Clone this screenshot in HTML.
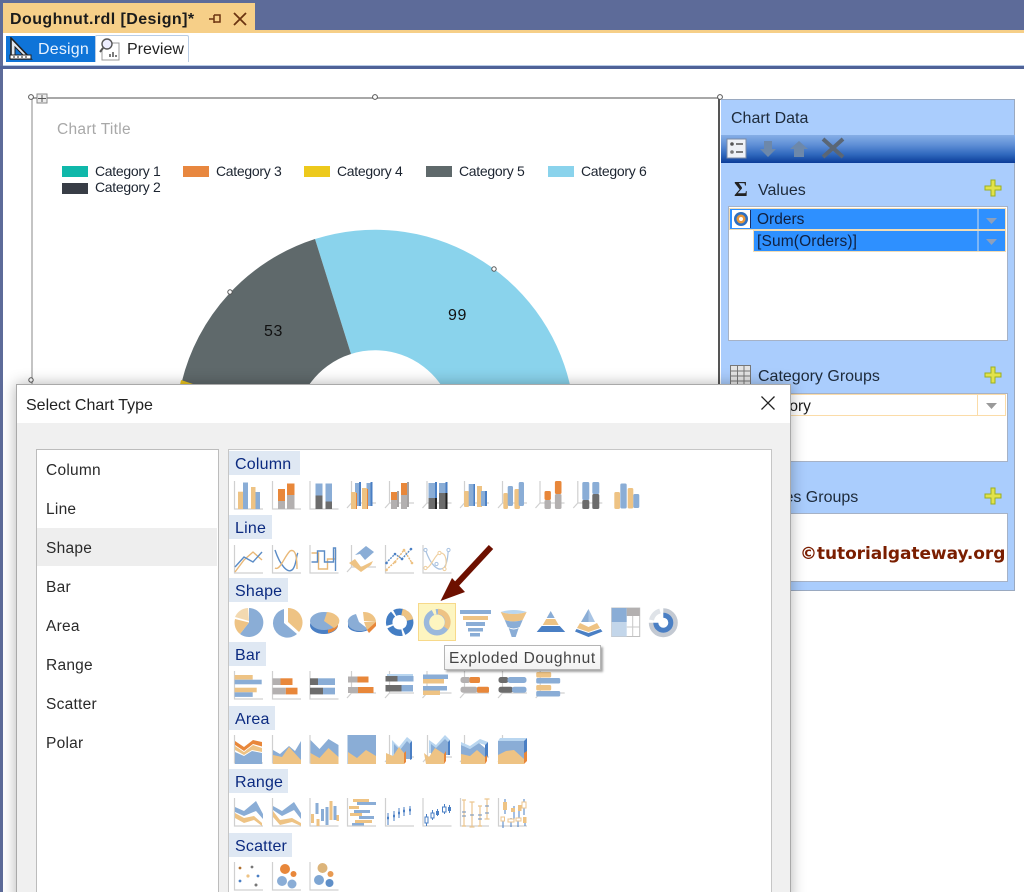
<!DOCTYPE html>
<html><head><meta charset="utf-8"><style>
html,body{margin:0;padding:0;background:#fff}
#p{position:relative;width:1024px;height:892px;overflow:hidden;background:#fff;font-family:"Liberation Sans",sans-serif}
.a{position:absolute}
.t{position:absolute;white-space:nowrap;line-height:1;margin-top:1px}
.leg{font-size:14px;color:#1c2430;letter-spacing:-.3px}
.sw{position:absolute;width:26px;height:11px}
.h{position:absolute;left:229px;height:24px;background:#dfe8f3;color:#0b2a80;font-size:16px;line-height:27px;padding-left:6px;box-sizing:border-box;letter-spacing:.2px}
.li{position:absolute;left:46px;font-size:15.5px;color:#2a2a2a;line-height:1;letter-spacing:.25px;margin-top:1px}
.pn{font-size:16px;color:#1d2a3a}
.box{position:absolute;left:728px;width:280px;background:#fff;border:1px solid #a6b2c6;box-sizing:border-box}
.b{fill:#8aadd6}.n{fill:#eec384}.o{fill:#e8873a}.g{fill:#b3b0b0}.d{fill:#6c6c6c}.k{fill:#4a7fc4}.l{fill:#b9d6f0}
.ax{fill:none;stroke:#d0d0d0;stroke-width:1.2}
.sb{fill:none;stroke:#5b8cc6;stroke-width:1.4}.sn{fill:none;stroke:#e9b877;stroke-width:1.4}
</style></head><body><div id="p">
<div class="a" style="left:0;top:0;width:1024px;height:30px;background:#5d6b99"></div>
<div class="a" style="left:3px;top:3px;width:252px;height:28px;background:#f6cf88"></div>
<div class="a" style="left:0;top:30px;width:1024px;height:3px;background:#f6cf88"></div>
<div class="a" style="left:0;top:0;width:3px;height:892px;background:#5d6b99"></div>
<div class="t" style="left:10px;top:11px;font-size:16px;font-weight:bold;color:#1b1b1b;letter-spacing:.43px">Doughnut.rdl [Design]*</div>
<svg class="a" style="left:205px;top:10px" width="45" height="18"><path d="M4 9h5M9 5v8M9 5h6v7H9" fill="none" stroke="#6b3410" stroke-width="1.5"/><path d="M29 3l12 12M41 3L29 15" stroke="#6b3410" stroke-width="1.8"/></svg>
<div class="a" style="left:3px;top:33px;width:1021px;height:32px;background:#fff"></div>
<div class="a" style="left:6px;top:36px;width:89px;height:27px;background:#0f74d8"></div>
<svg class="a" style="left:9px;top:37px" width="24" height="24"><path d="M2 1v21h20z" fill="#dfe6ee" stroke="#222" stroke-width="1.6"/><path d="M6 10v8h8z" fill="#0f74d8" stroke="#222"/><path d="M1 18h21v4H1z" fill="#fff" stroke="#222"/><path d="M5 19v2M9 19v2M13 19v2M17 19v2" stroke="#222"/></svg>
<div class="t" style="left:38px;top:41px;font-size:16px;color:#e8f2ff;letter-spacing:.2px">Design</div>
<div class="a" style="left:95px;top:35px;width:94px;height:28px;background:#fff;border:1px solid #b9cce4;border-bottom:0;box-sizing:border-box;border-radius:2px 2px 0 0"></div>
<svg class="a" style="left:98px;top:37px" width="24" height="24"><path d="M8 6h13v17H4V12" fill="#fff" stroke="#999"/><circle cx="9" cy="7" r="5" fill="#eef" stroke="#555" stroke-width="1.4"/><path d="M5 11l-3 4" stroke="#555" stroke-width="2"/><path d="M12 20v-3M15 20v-5M18 20v-2" stroke="#444" stroke-width="1.4"/></svg>
<div class="t" style="left:127px;top:41px;font-size:16px;color:#222">Preview</div>
<div class="a" style="left:3px;top:62px;width:1021px;height:4px;background:#fff;border-bottom:1px solid #b8cbe6;box-sizing:border-box"></div>
<div class="a" style="left:0;top:66px;width:1024px;height:3px;background:#4f6298"></div>

<!-- chart -->
<div class="a" style="left:31px;top:97px;width:689px;height:2px;background:#a8a8a8"></div>
<div class="a" style="left:31px;top:97px;width:2px;height:295px;background:#c4c4c4"></div>
<div class="a" style="left:718px;top:97px;width:2px;height:295px;background:#555"></div>
<svg class="a" style="left:0;top:0" width="1024" height="400">
<path d="M315 239A200 200 0 0 1 570 385H441A80 80 0 0 0 351 354Z" fill="#8ad3ec"/>
<path d="M315 239L351 354A80 80 0 0 0 309 385H181A200 200 0 0 1 315 239Z" fill="#5f696b"/>
<path d="M181 380L196 385H180Z" fill="#edc61c"/>
<g fill="#fff" stroke="#555"><circle cx="31" cy="97" r="2.4"/><circle cx="375" cy="97" r="2.4"/><circle cx="720" cy="97" r="2.4"/><circle cx="230" cy="292" r="2.2"/><circle cx="494" cy="269" r="2.2"/><circle cx="31" cy="380" r="2.2"/></g>
<rect x="37" y="94" width="10" height="9" fill="#eee" stroke="#888"/><path d="M42 95v7M38 98.500h8" stroke="#555"/>
</svg>
<div class="t" style="left:57px;top:121px;font-size:15.5px;color:#a8a8a8;letter-spacing:.3px">Chart Title</div>
<div class="sw" style="left:62px;top:166px;background:#0fb8aa"></div><div class="t leg" style="left:95px;top:163px">Category 1</div>
<div class="sw" style="left:62px;top:183px;background:#383d46"></div><div class="t leg" style="left:95px;top:179px">Category 2</div>
<div class="sw" style="left:183px;top:166px;background:#e8873f"></div><div class="t leg" style="left:216px;top:163px">Category 3</div>
<div class="sw" style="left:304px;top:166px;background:#edc91c"></div><div class="t leg" style="left:337px;top:163px">Category 4</div>
<div class="sw" style="left:426px;top:166px;background:#5f696b"></div><div class="t leg" style="left:459px;top:163px">Category 5</div>
<div class="sw" style="left:548px;top:166px;background:#8ad3ec"></div><div class="t leg" style="left:581px;top:163px">Category 6</div>
<div class="t" style="left:264px;top:323px;font-size:16px;color:#111;letter-spacing:.6px">53</div>
<div class="t" style="left:448px;top:307px;font-size:16px;color:#111;letter-spacing:.6px">99</div>

<!-- panel -->
<div class="a" style="left:721px;top:99px;width:294px;height:492px;background:#aacdfd;border:1px solid #9aa9c0;border-left:0;box-sizing:border-box"></div>
<div class="t pn" style="left:731px;top:110px">Chart Data</div>
<div class="a" style="left:721px;top:135px;width:294px;height:28px;background:linear-gradient(#86aee6 0,#5f8fd6 35%,#2f68bd 70%,#0b3c98 100%)"></div>
<svg class="a" style="left:721px;top:135px" width="130" height="28">
<rect x="6" y="4" width="19" height="19" fill="#eef1f6" stroke="#7b8aa5"/><circle cx="11" cy="9" r="1.800" fill="#555"/><circle cx="11" cy="17" r="1.800" fill="#777"/><path d="M15 9h7M15 17h7" stroke="#555" stroke-width="1.600"/>
<path d="M43 6h8v8h4l-8 8-8-8h4z" fill="#6d88aa"/><path d="M78 6l9 8h-4v8h-10v-8h-4z" fill="#6d88aa"/>
<path d="M102 4l20 18M122 4l-20 18" stroke="#5a6675" stroke-width="4"/></svg>
<div class="t" style="left:734px;top:178px;font-size:21px;font-weight:bold;color:#222;font-family:'Liberation Serif',serif">Σ</div>
<div class="t pn" style="left:758px;top:182px">Values</div>
<div class="box" style="top:206px;height:135px"></div>
<div class="a" style="left:730px;top:209px;width:275px;height:20px;background:#2e90ff;outline:1px solid #f2dcb4"></div>
<div class="a" style="left:732px;top:210px;width:18px;height:18px;background:#fff;border-right:1px solid #1b2f66"></div>
<svg class="a" style="left:733px;top:211px" width="16" height="16"><circle cx="8" cy="8" r="7" fill="#2e6fc0"/><circle cx="8" cy="8" r="4.500" fill="#e8973a"/><circle cx="8" cy="8" r="2" fill="#fff"/></svg>
<div class="t" style="left:757px;top:211px;font-size:15.5px;color:#102040">Orders</div>
<div class="a" style="left:754px;top:231px;width:251px;height:20px;background:#2e90ff;outline:1px solid #f2dcb4"></div>
<div class="t" style="left:757px;top:233px;font-size:15.5px;color:#102040;letter-spacing:.15px">[Sum(Orders)]</div>
<div class="a" style="left:977px;top:209px;width:2px;height:20px;background:#7eb6f6"></div>
<div class="a" style="left:977px;top:231px;width:2px;height:20px;background:#7eb6f6"></div>
<svg class="a" style="left:980px;top:209px" width="24" height="42"><path d="M6 9h11l-5.500 6z M6 30h11l-5.500 6z" fill="#8da0bc"/></svg>
<svg class="a" style="left:984px;top:179px" width="18" height="18"><path d="M7 1h4v6h6v4h-6v6H7v-6H1V7h6z" fill="#e2e24a" stroke="#9cb020"/></svg>
<svg class="a" style="left:730px;top:365px" width="22" height="22"><rect x=".5" y=".5" width="20" height="20" fill="#e4e4e4" stroke="#777"/><path d="M1 6h20M1 11h20M1 16h20M7.500 1v20M14 1v20" stroke="#777"/></svg>
<div class="t pn" style="left:758px;top:368px">Category Groups</div>
<svg class="a" style="left:984px;top:366px" width="18" height="18"><path d="M7 1h4v6h6v4h-6v6H7v-6H1V7h6z" fill="#e2e24a" stroke="#9cb020"/></svg>
<div class="box" style="top:393px;height:69px"></div>
<div class="a" style="left:729px;top:394px;width:277px;height:22px;background:#fff;border:1px solid #fbdca8;box-sizing:border-box"></div>
<div class="a" style="left:977px;top:395px;width:1px;height:20px;background:#fbdca8"></div>
<svg class="a" style="left:980px;top:396px" width="24" height="18"><path d="M6 7h11l-5.500 6z" fill="#9a9a9a"/></svg>
<div class="t" style="left:748px;top:398px;font-size:15.5px;color:#1a1a1a">Category</div>
<div class="t pn" style="left:756px;top:489px">Series Groups</div>
<svg class="a" style="left:984px;top:487px" width="18" height="18"><path d="M7 1h4v6h6v4h-6v6H7v-6H1V7h6z" fill="#e2e24a" stroke="#9cb020"/></svg>
<div class="box" style="top:513px;height:69px"></div>
<div class="t" style="left:800px;top:545px;font-size:17px;font-weight:bold;color:#7a1e00;font-family:'DejaVu Sans',sans-serif;letter-spacing:-.07px">©tutorialgateway.org</div>

<!-- dialog -->
<div class="a" style="left:16px;top:384px;width:775px;height:520px;background:#f0f0f0;border:1px solid #a9a9a9;box-sizing:border-box;box-shadow:0 0 14px rgba(0,0,0,.3)"></div>
<div class="a" style="left:17px;top:385px;width:773px;height:38px;background:#fff"></div>
<div class="t" style="left:26px;top:397px;font-size:16px;color:#222">Select Chart Type</div>
<svg class="a" style="left:760px;top:395px" width="16" height="16"><path d="M1.500 1.500l13 13M14.500 1.500l-13 13" stroke="#222" stroke-width="1.300"/></svg>
<div class="a" style="left:36px;top:449px;width:183px;height:460px;background:#fff;border:1px solid #bcbcbc;box-sizing:border-box"></div>
<div class="a" style="left:37px;top:528px;width:180px;height:38px;background:#eeeeee"></div>
<div class="li" style="top:462px">Column</div><div class="li" style="top:501px">Line</div><div class="li" style="top:540px">Shape</div><div class="li" style="top:579px">Bar</div><div class="li" style="top:618px">Area</div><div class="li" style="top:657px">Range</div><div class="li" style="top:696px">Scatter</div><div class="li" style="top:735px">Polar</div>
<div class="a" style="left:228px;top:449px;width:544px;height:460px;background:#fff;border:1px solid #c6c6c6;box-sizing:border-box"></div>
<div class="h" style="top:451px;width:71px">Column</div><div class="h" style="top:515px;width:43px">Line</div><div class="h" style="top:578px;width:59px">Shape</div><div class="h" style="top:642px;width:37px">Bar</div><div class="h" style="top:706px;width:46px">Area</div><div class="h" style="top:769px;width:59px">Range</div><div class="h" style="top:833px;width:63px">Scatter</div>
<div class="a" style="left:418px;top:603px;width:38px;height:38px;background:#fdf5c0;border:1px solid #f7d98a;box-sizing:border-box"></div>

<svg class="a" style="left:0;top:0" width="1024" height="892">
<defs>
<path id="A" class="ax" d="M.5 0V28H29"/>
<path id="C" class="ax" d="M4.500 0V22H29M4.500 22L0 27"/>
</defs>
<!-- ROW 1 -->
<g transform="translate(234 481)"><use href="#A"/><rect class="n" x="4" y="10.700" width="5" height="17.300"/><rect class="b" x="9" y="1.500" width="5" height="26.500"/><rect class="n" x="17" y="6" width="4.500" height="22"/><rect class="b" x="21.500" y="11" width="4.500" height="17"/></g>
<g transform="translate(272 481)"><use href="#A"/><rect class="g" x="6" y="20" width="7" height="8"/><rect class="o" x="6" y="8" width="7" height="12"/><rect class="g" x="15" y="14" width="7.500" height="14"/><rect class="o" x="15" y="2.500" width="7.500" height="11.500"/></g>
<g transform="translate(309.500 481)"><use href="#A"/><rect class="b" x="6" y="2.500" width="7" height="12"/><rect class="d" x="6" y="14.500" width="7" height="13.500"/><rect class="b" x="16" y="2.500" width="6.500" height="18"/><rect class="d" x="16" y="20.500" width="6.500" height="7.500"/></g>
<g transform="translate(347 481)"><use href="#C"/><rect class="b" x="8" y="2" width="4" height="23"/><rect class="k" x="12" y="1" width="2" height="24"/><rect class="n" x="4" y="11" width="5" height="17"/><rect class="b" x="19.500" y="2" width="4" height="23"/><rect class="k" x="23.500" y="1" width="2" height="24"/><rect class="n" x="15" y="7" width="5" height="21"/><rect x="9" y="12" width="1" height="16" fill="#e8873a"/><rect x="20" y="8" width="1" height="20" fill="#e8873a"/></g>
<g transform="translate(385 481)"><use href="#C"/><rect class="g" x="6" y="19" width="6" height="9"/><rect class="o" x="6" y="11" width="6" height="8"/><rect class="g" x="16" y="14" width="6" height="14"/><rect class="o" x="16" y="2" width="6" height="12"/><rect x="12" y="10" width="2" height="16" fill="#a5a2a2"/><rect x="22" y="1" width="2" height="25" fill="#a5a2a2"/></g>
<g transform="translate(422.500 481)"><use href="#C"/><rect class="b" x="6" y="2" width="6.500" height="15"/><rect class="d" x="6" y="17" width="6.500" height="11"/><rect class="b" x="16.500" y="2" width="6.500" height="10"/><rect class="d" x="16.500" y="12" width="6.500" height="16"/><rect class="k" x="12.500" y="1" width="2" height="16"/><rect x="12.500" y="17" width="2" height="11" fill="#222"/><rect class="k" x="23" y="1" width="2" height="11"/><rect x="23" y="12" width="2" height="16" fill="#222"/></g>
<g transform="translate(460 481)"><use href="#C"/><rect class="n" x="4" y="10" width="5" height="16" rx="1"/><rect class="b" x="8.700" y="3" width="5" height="22"/><rect class="k" x="13.500" y="3" width="1.500" height="22"/><rect class="n" x="17" y="5" width="5" height="21"/><rect class="b" x="21" y="10" width="4" height="15"/><rect class="k" x="25" y="10" width="2" height="15"/></g>
<g transform="translate(498 481)"><use href="#C"/><rect class="n" x="5.300" y="12" width="4.700" height="16" rx="1.500"/><rect class="b" x="9.700" y="5" width="5.300" height="20" rx="1.500"/><rect class="n" x="16.400" y="8" width="5.600" height="20" rx="1.500"/><rect class="b" x="20.700" y="1" width="5.300" height="24" rx="1.500"/></g>
<g transform="translate(535.500 481)"><use href="#C"/><rect class="g" x="9" y="19" width="6.400" height="9" rx="1.500"/><rect class="o" x="9" y="10" width="6.400" height="9" rx="1.500"/><rect class="g" x="19.400" y="13" width="6.600" height="15" rx="1.500"/><rect class="o" x="19.400" y="0" width="6.600" height="13" rx="1.500"/></g>
<g transform="translate(573.300 481)"><use href="#C"/><rect class="b" x="9" y="1" width="7" height="18" rx="1.500"/><rect class="d" x="9" y="19" width="7" height="9" rx="1.500"/><rect class="b" x="19" y="1" width="7" height="12" rx="1.500"/><rect class="d" x="19" y="13" width="7" height="15" rx="1.500"/></g>
<g transform="translate(611 481)"><rect class="n" x="3.300" y="11" width="5.700" height="17" rx="1.500"/><rect class="b" x="9.300" y="2.500" width="6.400" height="25" rx="1.500"/><rect class="n" x="16.700" y="7" width="5.600" height="20.500" rx="1.500"/><rect class="b" x="22.300" y="13" width="6" height="14" rx="1.500"/></g>
<!-- ROW 2 -->
<g transform="translate(234 545)"><use href="#A"/><path class="sn" d="M1 27L10 15L19 7L28 15"/><path class="sb" d="M1 22L10 12L19 17L28 7"/></g>
<g transform="translate(272 545)"><use href="#A"/><path class="sb" d="M3 5C8 20 16 30 21 24C25 18 24 10 26 8"/><path class="sn" d="M3 23C8 26 12 12 18 6C24 3 25 14 25 24"/></g>
<g transform="translate(309.500 545)"><use href="#A"/><path class="sn" d="M2 8H9V24H18V14H26V5"/><path class="sb" d="M2 17H8V6H15V17H24V3H26V26"/></g>
<g transform="translate(347 545)"><use href="#C"/><path class="b" d="M8 10L19 1L27 7L18 15L13 9Z"/><path class="n" d="M2 18L8 14L14 22L26 16L24 20L14 27Z"/></g>
<g transform="translate(385 545)"><use href="#A"/><path class="sn" d="M1 25L10 17L19 5L27 18" stroke-dasharray="2 1"/><path class="sb" d="M1 18L10 9L17 14L26 4" stroke-dasharray="2 1"/><g class="k"><circle cx="1.500" cy="18" r="1.300"/><circle cx="10" cy="9" r="1.300"/><circle cx="17" cy="14" r="1.300"/><circle cx="26" cy="4" r="1.300"/></g><g class="n"><circle cx="1.500" cy="25" r="1.300"/><circle cx="10" cy="17" r="1.300"/><circle cx="19" cy="5" r="1.300"/><circle cx="27" cy="18" r="1.300"/></g></g>
<g transform="translate(422.500 545)"><use href="#A"/><path d="M3 5C8 20 16 28 22 22C26 16 25 8 26 5" fill="none" stroke="#a9c2e0" stroke-width="1.200"/><path d="M3 23C8 24 12 10 17 8C24 7 25 18 22 24" fill="none" stroke="#efcf9f" stroke-width="1.200"/><g fill="#fff" stroke="#a9c2e0"><circle cx="3" cy="5" r="1.600"/><circle cx="26" cy="5" r="1.600"/><circle cx="14" cy="19" r="1.600"/></g><g fill="#fff" stroke="#efcf9f"><circle cx="3" cy="23" r="1.600"/><circle cx="17" cy="8" r="1.600"/><circle cx="22" cy="24" r="1.600"/></g></g>
<!-- ROW 3 -->
<path class="b" d="M249 608A14.500 14.500 0 1 1 240 634L249 622.500Z"/><path class="n" d="M240 634A14.500 14.500 0 0 1 235 619L249 622.500Z"/><path d="M235 617A14.500 14.500 0 0 1 248 608L249 621Z" fill="#f3d9b0"/>
<path class="b" d="M284 609A14.500 14.500 0 1 0 297 634L284 623Z"/><path class="n" d="M288 608A14.500 14.500 0 0 1 299 632L288 622Z"/>
<ellipse class="k" cx="324" cy="625" rx="14" ry="9"/><path class="o" d="M328 620H338V625A14 9 0 0 1 328 633Z"/><ellipse class="b" cx="324" cy="621" rx="14" ry="9"/><path class="n" d="M324 621L327 612A14 9 0 0 1 334 628Z"/>
<path class="k" d="M348 622V627A12 7 0 0 0 368 630L358 623Z"/><path class="b" d="M359 622L356 614A12 8 0 0 0 348 623A12 8 0 0 0 368 629Z"/><path class="n" d="M363 612A12 10 0 0 1 376 622L364 621Z"/><path class="n" d="M364 622H376L374 628L367 630Z"/><path class="o" d="M367 630L376 622V626L369 633Z"/>
<g fill="none" stroke-width="6.500"><circle cx="399.700" cy="622.300" r="10.500" stroke="#447ec4" stroke-dasharray="12 2 14 2 12 2 10 2"/><path d="M402 612A10.500 10.500 0 0 1 410 620" stroke="#eec384"/></g>
<g fill="none" stroke-width="5.500"><circle cx="437" cy="622.300" r="10.500" stroke="#9ab8dc"/><path d="M438 611.500A10.500 10.500 0 0 1 446 628" stroke="#eec384"/><path d="M433 612.500A10.500 10.500 0 0 1 436 611.500" stroke="#fdf5c0"/></g>
<g transform="translate(460 610)"><rect class="b" x="0" y="0" width="31" height="4"/><rect class="n" x="3" y="6" width="25" height="4"/><rect class="b" x="6" y="12" width="19" height="4"/><rect class="b" x="8" y="18" width="15" height="3.500"/><rect class="b" x="10" y="23" width="10" height="3.500"/></g>
<g transform="translate(500.700 610)"><path class="l" d="M0 2Q13-2 26 2Q13 6 0 2Z"/><path class="n" d="M0 2Q13 6 26 2L22 10Q13 13 4 10Z"/><path class="b" d="M4 10Q13 13 22 10L19 17Q13 20 7 17Z"/><path class="b" d="M8 18Q13 21 18 18L15 27H11Z"/></g>
<g transform="translate(536.700 611)"><path class="b" d="M14 0L18 7H10Z"/><path class="n" d="M9.500 8H18.500L22 14H6Z"/><path class="k" d="M5 15H23L28.500 21H0Z"/></g>
<g transform="translate(575 608)"><path class="b" d="M13.500 1L6 14H13.500Z"/><path d="M13.500 1L20 14H13.500Z" fill="#a8c4e4"/><path class="n" d="M5 15L13.500 19L22 15L25 20L13.500 24L2 20Z"/><path class="k" d="M1.500 21L13.500 25V29L0 23.500ZM25.500 21L13.500 25V29L27.500 23.500Z"/></g>
<g transform="translate(611.700 608)"><rect width="28" height="28.500" fill="#fff" stroke="#c0c0c0"/><rect class="b" x="0" y="0" width="15" height="14"/><rect class="g" x="15" y="0" width="13" height="8"/><rect x="0" y="14" width="15" height="14.500" fill="#c3d6ea"/><path d="M21 8V28M15 19H28" stroke="#c8c8c8"/></g>
<g fill="none"><path d="M663.300 610.700A12 12 0 1 1 651.300 622.700" stroke="#c3c9d2" stroke-width="5"/><path d="M651.500 620A12 12 0 0 1 660 611" stroke="#dfe3e8" stroke-width="5"/><path d="M663.300 615.200A7.500 7.500 0 1 1 655.800 622.700" stroke="#4a7fc4" stroke-width="5"/></g>
<!-- ROW 4 -->
<g transform="translate(234 671)"><use href="#A"/><rect class="n" x=".7" y="4" width="18" height="4.600"/><rect class="b" x=".7" y="8.700" width="27" height="4.600"/><rect class="n" x=".7" y="16.700" width="22" height="4.600"/><rect class="b" x=".7" y="21.300" width="18" height="4.600"/></g>
<g transform="translate(272 671)"><use href="#A"/><rect class="g" x=".5" y="7.300" width="8" height="6.700"/><rect class="o" x="8.500" y="7.300" width="12" height="6.700"/><rect class="g" x=".5" y="16.700" width="13.300" height="6.700"/><rect class="o" x="13.800" y="16.700" width="11.700" height="6.700"/></g>
<g transform="translate(309.500 671)"><use href="#A"/><rect class="d" x=".5" y="7.300" width="8" height="6.700"/><rect class="b" x="8.500" y="7.300" width="17" height="6.700"/><rect class="d" x=".5" y="16.700" width="13" height="6.700"/><rect class="b" x="13.500" y="16.700" width="12" height="6.700"/></g>
<g transform="translate(347 671)"><use href="#C"/><rect class="g" x="1" y="5.500" width="9.500" height="6"/><rect class="o" x="10.500" y="5.500" width="11" height="6"/><rect class="g" x="1" y="16" width="10" height="6"/><rect class="o" x="11" y="16" width="15.500" height="6"/></g>
<g transform="translate(385 671)"><use href="#C"/><rect class="d" x=".5" y="5" width="12" height="5.500"/><rect class="b" x="12.500" y="5" width="16" height="5.500"/><rect class="d" x=".5" y="14" width="16" height="6.500"/><rect class="b" x="16.500" y="14" width="11.500" height="6.500"/><rect class="l" x="2" y="3" width="26" height="2"/></g>
<g transform="translate(422.500 671)"><use href="#C"/><rect class="b" x=".5" y="3.500" width="25" height="4.500"/><rect class="n" x=".5" y="8" width="21" height="4.500"/><rect class="b" x=".5" y="15" width="24" height="4.500"/><rect class="n" x=".5" y="19.500" width="17" height="4.500"/></g>
<g transform="translate(460 671)"><use href="#C"/><rect class="g" x=".5" y="6" width="10" height="6" rx="2.500"/><rect class="o" x="9.500" y="6" width="10.500" height="6" rx="1.500"/><rect class="g" x=".5" y="15.700" width="17" height="6" rx="2.500"/><rect class="o" x="17" y="15.700" width="12" height="6" rx="1.500"/></g>
<g transform="translate(498 671)"><use href="#C"/><rect class="d" x=".5" y="6" width="10" height="6" rx="2.500"/><rect class="b" x="9.500" y="6" width="19" height="6" rx="2.500"/><rect class="d" x=".5" y="15.700" width="14.500" height="6" rx="2.500"/><rect class="b" x="14" y="15.700" width="14.500" height="6" rx="2.500"/></g>
<g transform="translate(535.700 671)"><use href="#C"/><rect class="n" x=".5" y="1" width="15" height="5.500" rx="1.500"/><rect class="b" x=".5" y="7" width="24" height="5.500" rx="1.500"/><rect class="n" x=".5" y="14" width="15" height="5.500" rx="1.500"/><rect class="b" x=".5" y="20" width="24" height="5.500" rx="1.500"/></g>
<!-- ROW 5 -->
<g transform="translate(234 735)"><use href="#A"/><path class="b" d="M1 17L10 21L18 16L28 18V29H1Z"/><path class="n" d="M1 11L10 17L19 10L28 13V17L18 15L10 20L1 15Z"/><path class="o" d="M1 6L10 12L19 5L28 7V11.500L19 9L10 16L1 10Z"/></g>
<g transform="translate(272 735)"><use href="#A"/><path class="b" d="M1 15L8 19L17 11L23 16L29 6V29H1Z"/><path class="n" d="M1 20L10 22L17 12L29 25V29H1Z"/></g>
<g transform="translate(309.500 735)"><use href="#A"/><path class="b" d="M1 5L10 14L19 4L29 10V29H1Z"/><path class="n" d="M1 18L10 23L19 13L29 22V29H1Z"/></g>
<g transform="translate(347 735)"><path class="b" d="M.5 0H29V29H.5Z"/><path class="n" d="M1 17L10 23L19 15L29 21V29H1Z"/></g>
<g transform="translate(385 735)"><use href="#C"/><path class="l" d="M7 5L14 12L22 2L27 6V22L7 22Z"/><path class="b" d="M9 9L15 15L22 6L25 9V24L9 24Z"/><path class="k" d="M25 8L27 6V24L25 25Z"/><path class="n" d="M1 18L8 21L14 12L19 18V29H1Z"/><path class="o" d="M19 18L21 16V27L19 29Z"/></g>
<g transform="translate(423 735)"><use href="#C"/><path class="l" d="M6 5L13 10L22 0L27 5V18H6Z"/><path class="b" d="M8 9L13 13L22 4L25 7V20H8Z"/><path class="k" d="M25 7L27 5V20H25Z"/><path class="n" d="M1 18L6 22L12 13L21 19V29H3Z"/><path class="o" d="M21 19L23 16V26L21 29Z"/></g>
<g transform="translate(460 735)"><use href="#C"/><path class="l" d="M1 7L10 11L20 4L28 7L25 10L19 8L10 14L1 10Z"/><path class="b" d="M1 10L10 14L19 8L25 13V25H1Z"/><path class="k" d="M25 10L28 7V21L25 25Z"/><path class="n" d="M1 19L10 21L17 15L25 22V29H1Z"/><path class="o" d="M25 22L27 20V26L25 29Z"/></g>
<g transform="translate(498 735)"><use href="#C"/><path class="l" d="M2 3H29L26 6H0Z"/><path class="b" d="M0 6H26V27H0Z"/><path class="k" d="M26 6L29 3V24L26 27Z"/><path class="n" d="M0 20L8 16L16 15L26 24V29H0Z"/><path class="o" d="M26 18L29 16V26L26 29Z"/></g>
<!-- ROW 6 -->
<g transform="translate(234 798)"><use href="#A"/><path class="b" d="M1 9L10 13L22 3L29 16V21L22 13L10 18L1 14Z"/><path class="n" d="M1 15L10 20L20 18L28 25V28L20 22L10 25L1 20Z"/></g>
<g transform="translate(272 798)"><use href="#A"/><path class="b" d="M1 8L10 13L22 4L29 15V21L22 12L10 18L1 12Z"/><path class="n" d="M1 13L8 22L20 20L29 25V28L20 24L8 27L1 19Z"/></g>
<g transform="translate(309.500 798)"><use href="#A"/><rect class="n" x="1.500" y="16" width="3" height="9"/><rect class="b" x="6" y="5" width="3" height="11"/><rect class="n" x="7" y="21" width="3" height="7"/><rect class="b" x="11.500" y="11" width="3" height="12"/><rect class="b" x="16" y="9" width="3" height="18"/><rect class="n" x="20" y="3" width="3" height="19"/><rect class="b" x="24" y="8" width="3" height="14"/><rect class="n" x="27" y="17" width="2.500" height="6"/></g>
<g transform="translate(347 798)"><use href="#A"/><rect class="n" x="6" y="1" width="16" height="3"/><rect class="b" x="10" y="4" width="19" height="3"/><rect class="n" x="2" y="8" width="10" height="3"/><rect class="b" x="7" y="12" width="16" height="3"/><rect class="n" x="3" y="15" width="12" height="3"/><rect class="b" x="12" y="18" width="15" height="3"/><rect class="n" x="8" y="22" width="17" height="3"/><rect class="b" x="5" y="25" width="12" height="2.500"/></g>
<g transform="translate(385 798)"><use href="#A"/><path d="M3 15v12M9 13v10M14 10v10M19 9v9M25 8v9" stroke="#4a7fc4" stroke-width="1"/><path d="M2 20h2M8 18h2M13 15h2M18 13h2M24 12h2" stroke="#4a7fc4" stroke-width="2.500"/></g>
<g transform="translate(422.500 798)"><use href="#A"/><path d="M4 16v12M10 12v10M15 11v7M22 6v10M27 7v8" stroke="#4a7fc4"/><rect x="2.500" y="19" width="3" height="6" fill="#fff" stroke="#4a7fc4"/><rect x="8.500" y="15" width="3" height="5" fill="#fff" stroke="#4a7fc4"/><rect class="k" x="13.500" y="13" width="3" height="4"/><rect x="20" y="9" width="3.500" height="5" fill="#fff" stroke="#4a7fc4"/><rect class="k" x="25.500" y="9" width="3" height="4"/></g>
<g transform="translate(460 798)"><use href="#A"/><path d="M4 2v26M2 2h4M2 28h4M12 4v25M9.500 4h5M9.500 29h5M20 8v20M18 8h4M18 28h4M27 1v20M24.500 1h5M24.500 21h5" stroke="#ecc68f" stroke-width="1.200"/><path d="M2 14h4M10 17h4M18 17h4M25 8h4M2 18h4M18 21h4M25 15h4" stroke="#6b8db8"/></g>
<g transform="translate(498 798)"><use href="#A"/><path d="M7 1v15M16 8v13M21 8v15M26 1v16M5 22v8M13 20v9M20 21v8M27 20v8" stroke="#4a7fc4"/><rect class="n" x="5" y="4" width="4" height="8"/><rect class="n" x="13" y="10" width="4" height="4"/><rect class="n" x="20" y="7" width="3.500" height="6"/><rect x="24" y="4" width="4" height="6" fill="#fff" stroke="#ecc68f"/><rect x="3" y="19" width="3.500" height="4" fill="#fff" stroke="#ecc68f"/><rect x="10" y="21" width="6" height="3" fill="#fff" stroke="#ecc68f"/><rect x="18" y="20" width="5" height="3" fill="#fff" stroke="#ecc68f"/><rect class="n" x="25" y="19" width="3.500" height="6"/></g>
<!-- ROW 7 -->
<g transform="translate(234 862)"><use href="#A"/><circle cx="6" cy="6" r="1.400" fill="#b07030"/><circle cx="18" cy="5" r="1.400" fill="#777"/><circle cx="14" cy="14" r="1.600" class="n"/><circle cx="24" cy="14" r="1.400" class="k"/><circle cx="6" cy="19" r="1.400" class="k"/><circle cx="22" cy="23" r="1.500" fill="#777"/></g>
<g transform="translate(272 862)"><use href="#A"/><circle cx="13" cy="7" r="5" class="o"/><circle cx="21.500" cy="12" r="3" class="o"/><circle cx="10" cy="19" r="5" class="b"/><circle cx="20" cy="22" r="4.500" class="b"/></g>
<g transform="translate(309.500 862)"><use href="#A"/><circle cx="13" cy="6" r="5" fill="#dcb47a"/><circle cx="21" cy="12" r="3" fill="#e89a52"/><circle cx="9.500" cy="18" r="5" fill="#7ea6d3"/><circle cx="20" cy="21" r="4" fill="#5f8fc8"/></g>
<!-- arrow -->
<path d="M491 547L452 589" stroke="#6d1000" stroke-width="6" fill="none"/><path d="M440.500 601L452 578L465 592Z" fill="#6d1000"/>
</svg>
<div class="a" style="left:444px;top:645px;width:157px;height:25px;background:linear-gradient(#fff,#f2f2f2);border:1px solid #b5b5b5;box-sizing:border-box;box-shadow:2px 2px 2px rgba(0,0,0,.35)"></div>
<div class="t" style="left:449px;top:650px;font-size:15.5px;color:#444;letter-spacing:.63px">Exploded Doughnut</div>
</div></body></html>
